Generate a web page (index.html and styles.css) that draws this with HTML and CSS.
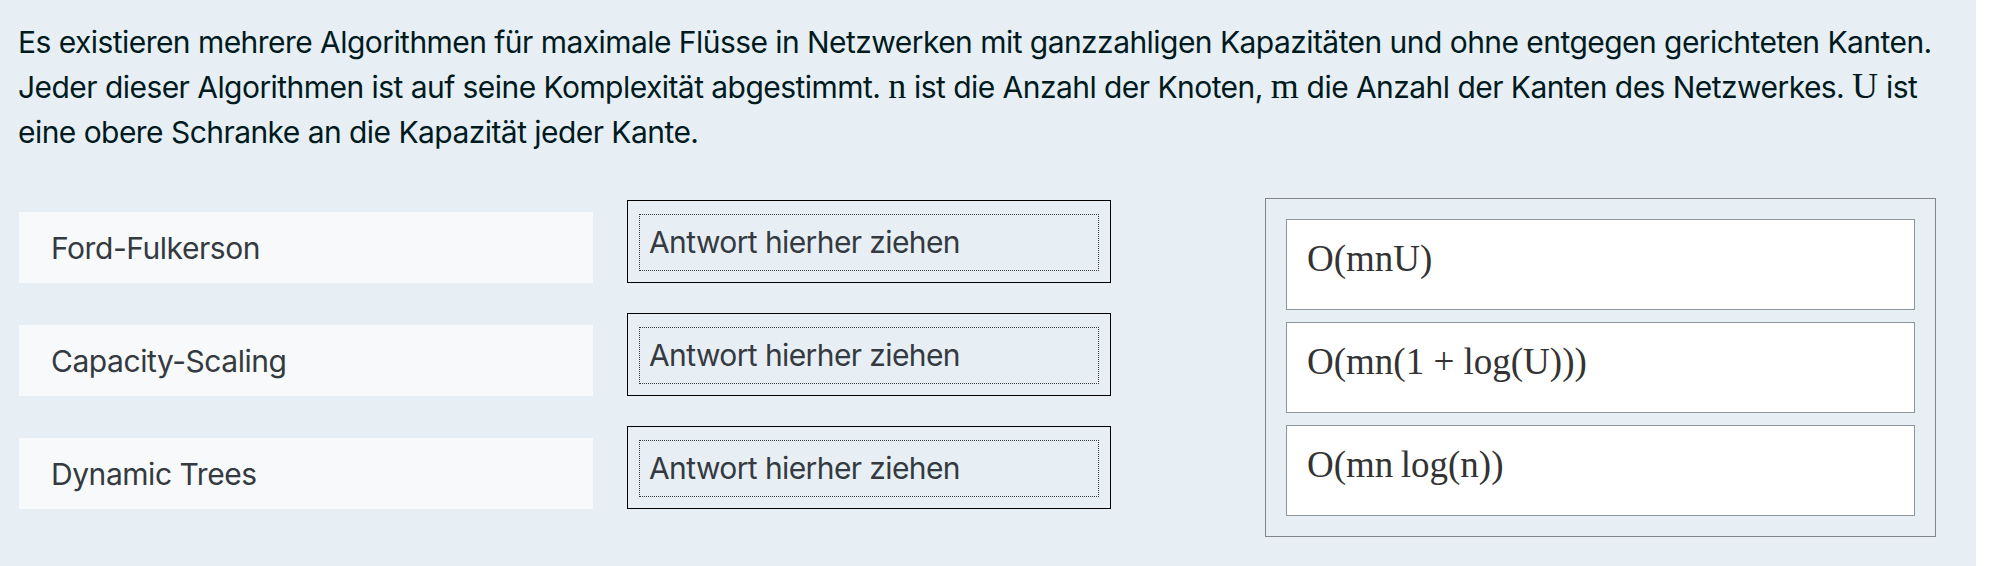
FILE: index.html
```html
<!DOCTYPE html>
<html lang="de">
<head>
<meta charset="utf-8">
<title>Maximale Flüsse</title>
<link rel="stylesheet" href="styles.css">
</head>
<body>
<div class="formulation">
  <p class="qtext">Es existieren mehrere Algorithmen für maximale Flüsse in Netzwerken mit ganzzahligen Kapazitäten und ohne entgegen gerichteten Kanten. Jeder dieser Algorithmen ist auf seine Komplexität abgestimmt. <span class="math">n</span> ist die Anzahl der Knoten, <span class="math">m</span> die Anzahl der Kanten des Netzwerkes. <span class="math">U</span> ist eine obere Schranke an die Kapazität jeder Kante.</p>
  <div class="ablock">
    <div class="matches">
      <div class="item">Ford-Fulkerson</div>
      <div class="drop"><div class="drop-inner">Antwort hierher ziehen</div></div>
      <div class="item">Capacity-Scaling</div>
      <div class="drop"><div class="drop-inner">Antwort hierher ziehen</div></div>
      <div class="item">Dynamic Trees</div>
      <div class="drop"><div class="drop-inner">Antwort hierher ziehen</div></div>
    </div>
    <div class="choices">
      <div class="choice">O(mnU)</div>
      <div class="choice">O(mn(1 + log(U)))</div>
      <div class="choice">O(mn&thinsp;log(n))</div>
    </div>
  </div>
</div>
</body>
</html>
```

FILE: styles.css
```css
body {
  margin: 0;
  background: #ffffff;
  font-family: Inter, "Liberation Sans", sans-serif;
  letter-spacing: -0.45px;
}

.formulation {
  width: 1976px;
  min-height: 566px;
  box-sizing: border-box;
  background: #e7eff5;
  color: #001a1e;
  padding: 20px 18px 0 18px;
}

.qtext {
  margin: 0;
  font-size: 30px;
  line-height: 45px;
  letter-spacing: -0.55px;
}

.math {
  font-family: "Liberation Serif", serif;
  font-size: 36px;
  line-height: 1;
  letter-spacing: 0;
}

.ablock {
  display: flex;
  align-items: flex-start;
  margin-top: 43px;
  padding-left: 1px;
}

.matches {
  display: grid;
  grid-template-columns: 574px 484px;
  column-gap: 34px;
  row-gap: 30px;
  align-items: end;
  margin-top: 2px;
}

.item {
  height: 71px;
  box-sizing: border-box;
  background: #f8f9fa;
  display: flex;
  align-items: center;
  padding-left: 32px;
  font-size: 30px;
  color: #343a40;
}

.drop {
  height: 83px;
  box-sizing: border-box;
  border: 1px solid #000000;
  padding: 13px 11px 11px 11px;
}

.drop-inner {
  height: 100%;
  box-sizing: border-box;
  border: 1px dotted #343a40;
  display: flex;
  align-items: center;
  padding: 0 0 1px 9px;
  font-size: 30px;
  letter-spacing: -0.6px;
  color: #343a40;
}

.choices {
  margin-left: 154px;
  width: 671px;
  box-sizing: border-box;
  border: 1px solid #80868b;
  padding: 20px;
  display: flex;
  flex-direction: column;
  gap: 12px;
}

.choice {
  height: 91px;
  box-sizing: border-box;
  background: #ffffff;
  border: 1px solid #8f959e;
  padding: 17px 20px 0 20px;
  font-family: "Liberation Serif", serif;
  font-size: 37px;
  line-height: normal;
  letter-spacing: 0;
  color: #333333;
}
```
